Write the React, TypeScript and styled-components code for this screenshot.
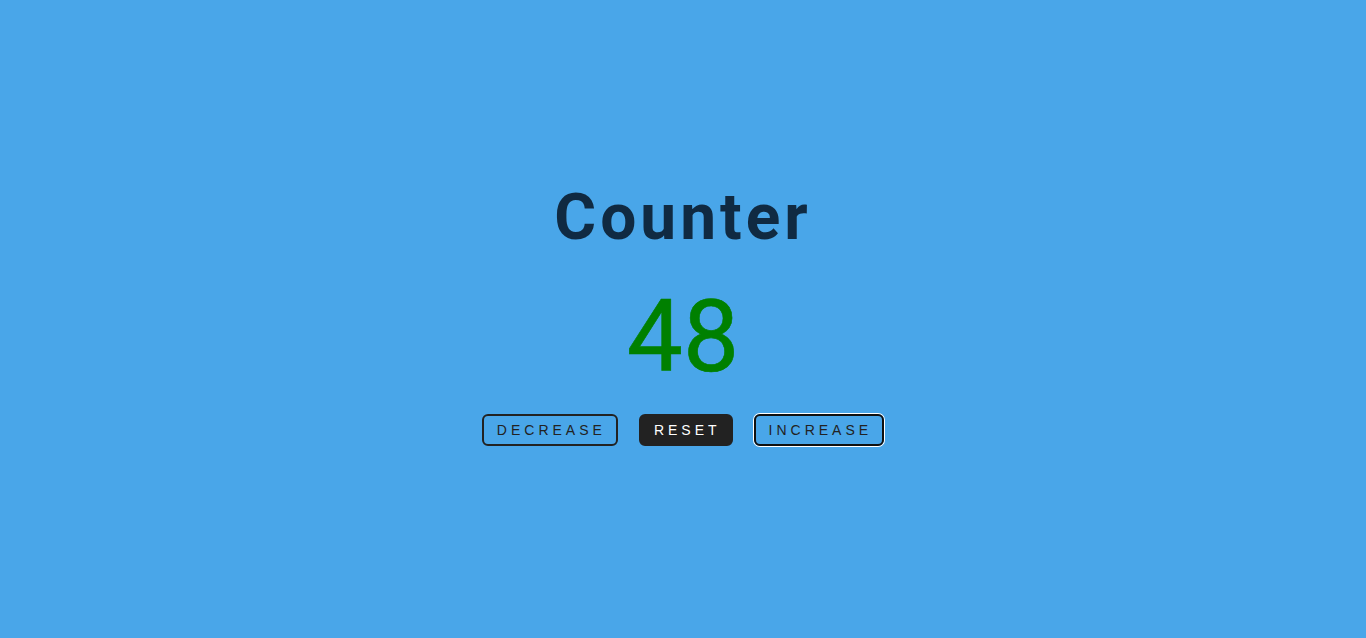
import styled, { createGlobalStyle } from 'styled-components'

const GlobalStyle = createGlobalStyle`
  * {
    box-sizing: border-box;
  }
  body {
    margin: 0;
    background: #49a6e9;
    font-family: Roboto, "Liberation Sans", Arial, sans-serif;
  }
`;

const Main = styled.main`
  min-height: 100vh;
  display: flex;
  flex-direction: column;
  align-items: center;
  justify-content: center;
  padding-bottom: 12px;
`;

const Title = styled.h1`
  margin: 0;
  color: #102a42;
  font-family: Roboto, sans-serif;
  font-size: 64px;
  font-weight: 700;
  letter-spacing: 4px;
`;

const Value = styled.span`
  display: block;
  margin-top: 23px;
  color: #008000;
  font-family: Roboto, sans-serif;
  font-size: 100px;
  font-weight: 400;
  line-height: normal;
  -webkit-text-stroke: 0.6px #008000;
`;

const ButtonRow = styled.div`
  display: flex;
  gap: 21px;
  margin-top: 19px;
`;

const Button = styled.button<{ $variant?: 'dark' | 'focus' }>`
  font-family: "Liberation Sans", Arial, sans-serif;
  font-size: 14px;
  line-height: normal;
  text-transform: uppercase;
  letter-spacing: 4px;
  padding: 6px 10px 6px 13px;
  border-radius: 6px;
  border: 2px solid ${p => (p.$variant === 'focus' ? '#101010' : '#222')};
  background: ${p => (p.$variant === 'dark' ? '#222' : 'transparent')};
  color: ${p => (p.$variant === 'dark' ? '#fff' : '#222')};
  box-shadow: ${p => (p.$variant === 'focus' ? '0 0 0 1px #fff' : 'none')};
  cursor: pointer;
`;

export default function App() {
  return (
    <>
      <GlobalStyle />
      <Main>
        <Title>Counter</Title>
        <Value>48</Value>
        <ButtonRow>
          <Button>decrease</Button>
          <Button $variant="dark">reset</Button>
          <Button $variant="focus">increase</Button>
        </ButtonRow>
      </Main>
    </>
  )
}
